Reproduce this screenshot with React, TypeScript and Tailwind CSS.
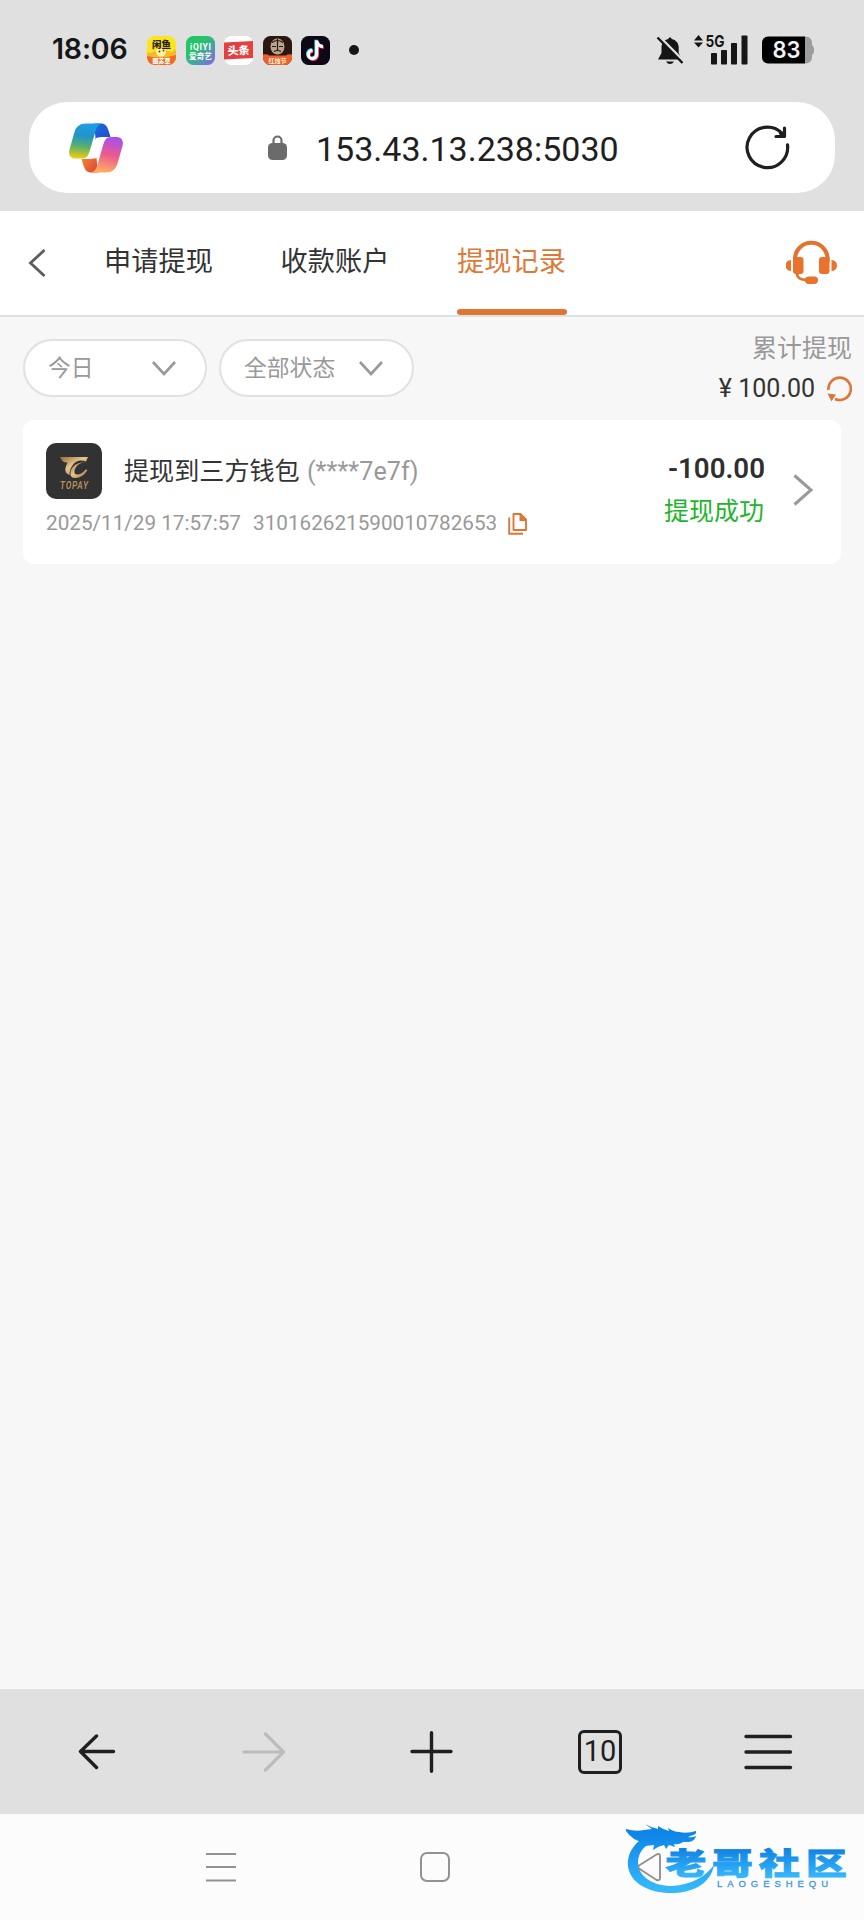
import React from "react";
import clsx from "clsx";

interface WithdrawRecord {
  title: string;
  account: string;
  time: string;
  orderNo: string;
  amount: string;
  status: string;
}

const tabs = ["申请提现", "收款账户", "提现记录"];

const records: WithdrawRecord[] = [
  {
    title: "提现到三方钱包",
    account: "(****7e7f)",
    time: "2025/11/29 17:57:57",
    orderNo: "310162621590010782653",
    amount: "-100.00",
    status: "提现成功",
  },
];

/* ---------- status bar ---------- */

function NotificationIcons() {
  return (
    <div className="ml-[19px] flex items-center gap-[9.6px]">
      {/* Xianyu */}
      <svg width="29" height="29" viewBox="0 0 29 29">
        <clipPath id="app-clip">
          <rect width="29" height="29" rx="7.5" />
        </clipPath>
        <g clipPath="url(#app-clip)">
          <rect width="29" height="29" fill="#fbe51e" />
          <path d="M3 17q11-5 22-1l3-3 1 3v6H0v-6z" fill="#f5b92c" />
          <ellipse cx="14" cy="16" rx="5" ry="4.5" fill="#fff3a0" />
          <circle cx="12.5" cy="15.5" r=".9" fill="#4a3510" />
          <circle cx="16.5" cy="14.5" r=".9" fill="#4a3510" />
          <path d="M0 20q14 4 29-1v10H0z" fill="#ef6a24" />
          <text x="14.5" y="12" textAnchor="middle" fontSize="9.5" fontWeight="900" fill="#26210a">闲鱼</text>
          <text x="14.5" y="27" textAnchor="middle" fontSize="6" fontWeight="900" fill="#fff">圈苏草</text>
        </g>
      </svg>
      {/* iQIYI */}
      <svg width="29" height="29" viewBox="0 0 29 29">
        <linearGradient id="iqiyi" x1="0" y1="0" x2="1" y2="1">
          <stop offset=".35" stopColor="#25c566" />
          <stop offset=".65" stopColor="#4c9fa8" />
          <stop offset="1" stopColor="#8a5cf0" />
        </linearGradient>
        <rect width="29" height="29" rx="7.5" fill="url(#iqiyi)" />
        <text x="4" y="13.5" fontSize="8.5" fontWeight="700" fill="#fff" textLength="21">iQIYI</text>
        <text x="14.5" y="22.5" textAnchor="middle" fontSize="7.6" fontWeight="700" fill="#fff">爱奇艺</text>
      </svg>
      {/* Toutiao */}
      <svg width="29" height="29" viewBox="0 0 29 29">
        <rect width="29" height="29" rx="7.5" fill="#fff" />
        <path d="M0 6.5 29 5v17L0 23.5z" fill="#e5403f" />
        <text x="14.5" y="18.5" textAnchor="middle" fontSize="11" fontWeight="900" fill="#fff" transform="rotate(-3 14.5 14.5)">头条</text>
      </svg>
      {/* Fanqie */}
      <svg width="29" height="29" viewBox="0 0 29 29">
        <g clipPath="url(#app-clip)">
          <rect width="29" height="29" fill="#2b1712" />
          <ellipse cx="14.5" cy="10.5" rx="7" ry="8" fill="#b9a48f" />
          <path d="M9 6.500q5.500-4 11 0M9 10.500h4M16 10.500h4M14.500 3v11M11 15.500q3.500-2 7 0" stroke="#2b1712" strokeWidth="1.200" fill="none" />
          <path d="M0 18.500q4-1 6 1h17q2-2 6-1V29H0z" fill="#ee5f2c" />
          <text x="14.5" y="27" textAnchor="middle" fontSize="6" fontWeight="900" fill="#ffe2c0">红烛节</text>
        </g>
      </svg>
      {/* Douyin */}
      <svg width="29" height="29" viewBox="0 0 29 29">
        <rect width="29" height="29" rx="7.5" fill="#0c0816" />
        <g fill="none" strokeWidth="3.200">
          <path d="M15.700 4.500v14a4.200 4.200 0 1 1-4.200-4.200M15.700 5c.6 3.500 3.200 5.400 6.300 5.600" stroke="#27e6e2" transform="translate(-.7 -.7)" />
          <path d="M15.700 4.500v14a4.200 4.200 0 1 1-4.200-4.200M15.700 5c.6 3.500 3.200 5.400 6.300 5.600" stroke="#fb2b57" transform="translate(.8 .8)" />
          <path d="M15.700 4.500v14a4.200 4.200 0 1 1-4.200-4.200M15.700 5c.6 3.500 3.200 5.400 6.300 5.600" stroke="#fff" />
        </g>
      </svg>
    </div>
  );
}

function StatusBar() {
  return (
    <div className="flex h-[102px] items-center pb-0.5 pl-[52px] pr-[50px]">
      <span className="w-[76px] whitespace-nowrap pb-0.5 font-['Inter'] text-[28.5px] font-semibold leading-none tracking-[-.2px] text-[#161616]">
        18:06
      </span>
      <NotificationIcons />
      <span className="ml-[19px] h-2.5 w-2.5 rounded-full bg-[#161616]" />

      <svg className="ml-auto" width="28" height="29" viewBox="0 0 28 29">
        <path d="M14 1.500c1 0 1.600.6 1.700 1.500 4.300.9 7 4 7 8.500v5.500l3.300 6.500H2l3.500-6.500v-5.500c0-4.500 2.600-7.600 6.800-8.500.1-.9.700-1.500 1.700-1.500z" fill="#161616" />
        <path d="M10 25.500h8q-1.500 2.500-4 2.500t-4-2.500z" fill="#161616" />
        <path d="M4 1.500 28 25.500" stroke="#e0e0e0" strokeWidth="3" />
        <path d="M1.500 1.500 26.500 27" stroke="#161616" strokeWidth="2.400" />
      </svg>
      <svg className="ml-2.5" width="54" height="42" viewBox="0 -6 54 42">
        <path d="M0 5.500 4.500 0 9 5.500zM0 7.500h9L4.500 12.500z" fill="#161616" />
        <text x="11.500" y="12" fontFamily="Inter" fontSize="16" fontWeight="700" textLength="19" lengthAdjust="spacingAndGlyphs" fill="#161616">5G</text>
        <g fill="#161616">
          <rect x="17" y="18" width="6" height="11.500" rx=".8" />
          <rect x="27" y="15" width="6" height="14.500" rx=".8" />
          <rect x="37" y="8" width="6" height="21.500" rx=".8" />
          <rect x="47.500" y=".5" width="6" height="29" rx=".8" />
        </g>
      </svg>
      <svg className="ml-[13px]" width="53" height="28" viewBox="0 0 53 28">
        <path d="M44 .5h1a6 6 0 0 1 6 6v2.500q2 1 2 5t-2 5v2.500a6 6 0 0 1-6 6h-1z" fill="#9c9c9c" />
        <path d="M7 .5h37v27H7a6 6 0 0 1-6-6V6.500a6 6 0 0 1 6-6z" fill="#000" />
        <text x="11.500" y="22.300" fontFamily="Inter" fontSize="23" fontWeight="600" textLength="28" lengthAdjust="spacingAndGlyphs" fill="#f2f2f2">83</text>
      </svg>
    </div>
  );
}

/* ---------- browser chrome ---------- */

function CopilotLogo() {
  return (
    <svg width="54" height="50" viewBox="0 0 54 50">
      <defs>
        <linearGradient id="cp-left" x1=".5" y1="0" x2=".4" y2="1">
          <stop offset="0" stopColor="#1c9ee8" />
          <stop offset=".35" stopColor="#2393c8" />
          <stop offset=".65" stopColor="#55b06f" />
          <stop offset="1" stopColor="#f0cb12" />
        </linearGradient>
        <linearGradient id="cp-right" x1=".6" y1="0" x2=".4" y2="1">
          <stop offset="0" stopColor="#a650ee" />
          <stop offset=".5" stopColor="#ee5a8c" />
          <stop offset="1" stopColor="#ffb061" />
        </linearGradient>
        <linearGradient id="cp-top" x1="0" y1="0" x2="1" y2="1">
          <stop offset="0" stopColor="#1b6fdc" />
          <stop offset="1" stopColor="#1f46cf" />
        </linearGradient>
        <linearGradient id="cp-bottom" x1="0" y1="0" x2="1" y2="1">
          <stop offset="0" stopColor="#f7902f" />
          <stop offset="1" stopColor="#dc4238" />
        </linearGradient>
      </defs>
      <path d="M25 .5h7c4 0 6 2.500 7.500 7l2 6.500H33c-4 0-5 3-6 6z" fill="url(#cp-top)" />
      <path d="M29 49.500h-7c-4 0-6-2.500-7.500-7l-2-6.500H21c4 0 5-3 6-6z" fill="url(#cp-bottom)" />
      <path d="M17 .5h16c-4 .5-5.500 4.500-7 9.500l-5 17c-1.500 5-3 8.500-8 8.500H7c-5 0-8-3-6.500-9l5-17.500C7 3.500 11 .5 17 .5z" fill="url(#cp-left)" />
      <path d="M37 49.500H22c4-.5 5.500-4.500 7-9.500l5-17.500c1.500-5 3-8.500 8-8.500h5c5 0 8 3 6.500 9l-5 17.500C46.500 46.500 43 49.500 37 49.500z" fill="url(#cp-right)" />
      {/* gap between the two ribbons */}
      <path d="M29 14.500h7.500c-2 1.500-2.800 4-3.500 6.500l-3 10c-1 3-2.500 4.500-5 4.500h-6c2-1 2.500-4 3.500-7.500l2.500-8c1-3.500 2-5.500 4-5.500z" fill="#fff" />
    </svg>
  );
}

function AddressBar() {
  return (
    <div className="mx-[29px] flex h-[91px] items-center rounded-[38px] bg-white pl-10 pr-[45px]">
      <CopilotLogo />
      <svg className="ml-[145px]" width="19" height="25" viewBox="0 0 19 25">
        <rect y="8" width="19" height="17" rx="4.500" fill="#6b6b6b" />
        <path d="M5.500 10V5.500a4 4 0 0 1 8 0V10" fill="none" stroke="#6b6b6b" strokeWidth="2.200" />
      </svg>
      <span className="ml-[29px] mt-0.5 whitespace-nowrap text-[34px] leading-none text-[#1f1f1f]">
        153.43.13.238:5030
      </span>
      <svg className="ml-auto" width="45" height="45" viewBox="0 0 45 45" fill="none" stroke="#1f1f1f" strokeWidth="3.200" strokeLinecap="round" strokeLinejoin="round">
        <path d="M42.500 19.800A20.300 20.300 0 1 1 36.700 8" />
        <path d="M39.500 3v8.500h-8.500" />
        <path d="M35.500 8.500l3 2" />
      </svg>
    </div>
  );
}

/* ---------- page ---------- */

function Header() {
  return (
    <header className="flex h-[106px] items-stretch border-b-2 border-[#e0e0e0] bg-white pl-7 pr-[27px]">
      <svg className="mt-[38px]" width="18" height="28" viewBox="0 0 18 28" fill="none" stroke="#5c5c5c" strokeWidth="2.800">
        <path d="M16.500 1 2.500 14l14 13" />
      </svg>
      <nav className="ml-[58px] flex gap-[67.500px]">
        {tabs.map((tab, i) => (
          <button
            key={tab}
            className={clsx(
              "flex w-[109px] flex-col justify-between whitespace-nowrap pt-[31px] text-[27.2px] leading-10",
              i === 2 ? "text-[#dd7a38]" : "text-[#333333]"
            )}
          >
            <span>{tab}</span>
            {i === 2 && <span className="h-[6px] w-[110px] rounded-full bg-[#dd7533]" />}
          </button>
        ))}
      </nav>
      {/* Customer service */}
      <svg className="ml-auto mt-[29px]" width="51" height="45" viewBox="0 0 51 45">
        <g fill="#e9732c">
          <path d="M5 20v11a5.500 5.500 0 0 1 0-11zM45.500 20v11a5.500 5.500 0 0 0 0-11z" />
          <path d="M7 17h7.500a3 3 0 0 1 3 3v11a3 3 0 0 1-3 3H10a3 3 0 0 1-3-3zM43.500 17H36a3 3 0 0 0-3 3v11a3 3 0 0 0 3 3h4.500a3 3 0 0 0 3-3z" />
          <rect x="19" y="36.500" width="13" height="7.500" rx="3.700" />
        </g>
        <path d="M9 22v-3a16.300 16.300 0 0 1 32.600 0v3" fill="none" stroke="#e0732f" strokeWidth="4" />
        <path d="M11 33c0 5 3 7 11 7" fill="none" stroke="#e0732f" strokeWidth="2.800" />
      </svg>
    </header>
  );
}

function Select({ label, className }: { label: string; className: string }) {
  return (
    <button
      className={clsx(
        "flex h-[58px] items-center justify-between rounded-full border-2 border-[#e1e1e1] bg-white pl-[23px] text-[22.8px] text-[#999999]",
        className
      )}
    >
      <span className="mt-0.5 whitespace-nowrap leading-none">{label}</span>
      <svg width="24" height="15" viewBox="0 0 24 15" fill="none" stroke="#999999" strokeWidth="2.600">
        <path d="m1 1 11 12L23 1" />
      </svg>
    </button>
  );
}

function FilterBar() {
  return (
    <div className="flex h-[103px] justify-between pl-[23px] pr-3 pt-[22px]">
      <div className="flex gap-3">
        <Select label="今日" className="w-[184px] pr-[29px]" />
        <Select label="全部状态" className="w-[195px] pr-[29px]" />
      </div>
      <div className="-mt-[7px] flex flex-col items-end">
        <span className="text-[25px] leading-[34px] text-[#999999]">累计提现</span>
        <div className="mt-1 flex items-center">
          <span className="whitespace-pre text-[25px] leading-[38px] text-[#333333]">¥ 100.00</span>
          <svg className="ml-3" width="25" height="26" viewBox="0 0 25 26">
            <path d="M1.500 14A11.200 11.200 0 1 1 8 23" fill="none" stroke="#dd7636" strokeWidth="2.600" />
            <path d="M.5 17.500 9 18.500 4.500 25.500z" fill="#dd7636" />
          </svg>
        </div>
      </div>
    </div>
  );
}

function TopayLogo() {
  return (
    <svg width="56" height="56" viewBox="0 0 56 56">
      <linearGradient id="gold" x1="0" y1="0" x2="1" y2="1">
        <stop offset="0" stopColor="#94693a" />
        <stop offset=".45" stopColor="#e4c58c" />
        <stop offset="1" stopColor="#a3733c" />
      </linearGradient>
      <rect width="56" height="56" rx="10" fill="#323232" />
      <path d="M14 14h28l-2 4.500q-8-3-12.500 2.500-4 5-4 11-6-2.500-3.500-9l1.500-3.500q-5 .5-7.500-5.500z" fill="url(#gold)" />
      <path d="M41 19q-9 0-12 7-2 5 2 5.500 5 0 8.500-5l2 .5q-5 8-12 8-6 0-5-6 2-10 16.500-10z" fill="url(#gold)" />
      <text x="0" y="0" transform="translate(14 46) scale(.8 1)" fontSize="10.500" fontWeight="600" fontStyle="italic" textLength="35" fill="#b58f5e">TOPAY</text>
    </svg>
  );
}

function RecordCard({ record }: { record: WithdrawRecord }) {
  return (
    <div className="mx-[23px] flex h-[144px] rounded-[11px] bg-white pl-[23px] pr-[27px]">
      <div className="flex flex-col pt-[23px]">
        <div className="flex h-14 items-center">
          <TopayLogo />
          <span className="ml-[22px] mt-0.5 whitespace-pre text-[25.1px] leading-none text-[#333333]">
            {record.title}{" "}
            <span className="ml-px tracking-[.1px] text-[#999999]">{record.account}</span>
          </span>
        </div>
        <div className="mt-2 flex h-8 items-center text-[20.7px] leading-none text-[#999999]">
          <span className="whitespace-nowrap">{record.time}</span>
          <span className="ml-3 whitespace-nowrap">{record.orderNo}</span>
          {/* Copy */}
          <svg className="ml-[11px] mt-0.5" width="19" height="22" viewBox="0 0 19 22">
            <path d="M5.500 1h7l5.500 5.500V17H5.500z" fill="none" stroke="#dd7636" strokeWidth="1.900" strokeLinejoin="round" />
            <path d="M11.500 1h1.500l5 5.500v1.500h-6.500z" fill="#dd7636" />
            <path d="M1.200 4.500v16.200H15" fill="none" stroke="#dd7636" strokeWidth="1.900" />
          </svg>
        </div>
      </div>
      <div className="ml-auto flex flex-col items-end pt-8">
        <span className="text-[27.7px] font-semibold leading-[34px] text-[#2f2f2f]">{record.amount}</span>
        <span className="mr-px mt-[8px] text-[25px] leading-9 text-[#1db52c]">{record.status}</span>
      </div>
      <svg className="ml-7 mt-[54px]" width="21" height="32" viewBox="0 0 21 32" fill="none" stroke="#999999" strokeWidth="3">
        <path d="m1.500 1.500 16.500 14.500L1.500 30.500" />
      </svg>
    </div>
  );
}

/* ---------- bottom bars ---------- */

function Toolbar() {
  return (
    <div className="flex h-[125px] items-center bg-[#e0e0e0] pl-[78px]">
      <svg width="38" height="36" viewBox="0 0 38 36" fill="none" stroke="#1f1f1f" strokeWidth="3.400" strokeLinecap="round" strokeLinejoin="round">
        <path d="M35.500 17.500H2.500M18.500 2 2.500 17.500l16 16" />
      </svg>
      <svg className="ml-[126px]" width="44" height="40" viewBox="0 0 44 40" fill="none" stroke="#bcbcbc" strokeWidth="3.200" strokeLinecap="round" strokeLinejoin="round">
        <path d="M2 20h39.500M23.500 2l18 18-18 18" />
      </svg>
      <svg className="ml-[124px]" width="43" height="42" viewBox="0 0 43 42" fill="none" stroke="#1f1f1f" strokeWidth="3.400" strokeLinecap="round">
        <path d="M2 20.500h39M21.500 1.700v38.500" />
      </svg>
      <div className="ml-[125px] flex h-11 w-11 items-center justify-center rounded-[6px] border-[3px] border-[#1f1f1f] text-[29px] leading-none text-[#1f1f1f]">
        10
      </div>
      <svg className="ml-[122px]" width="49" height="36" viewBox="0 0 49 36" fill="none" stroke="#1f1f1f" strokeWidth="3.400" strokeLinecap="round">
        <path d="M2 2.500h44.500M2 18h44.500M2 33.500h44.500" />
      </svg>
    </div>
  );
}

function Watermark() {
  return (
    <svg className="absolute left-[624px] top-2" width="232" height="76" viewBox="0 0 232 76">
      <linearGradient id="blue" gradientUnits="userSpaceOnUse" x1="0" y1="10" x2="0" y2="66">
        <stop offset="0" stopColor="#0d84e8" />
        <stop offset="1" stopColor="#33b8fb" />
      </linearGradient>
      <linearGradient id="blue-text" gradientUnits="userSpaceOnUse" x1="0" y1="-26" x2="0" y2="2">
        <stop offset="0" stopColor="#0f80e2" />
        <stop offset="1" stopColor="#34b4fa" />
      </linearGradient>
      <g fill="url(#blue)">
        <path d="M34 9C12 16 3 30 4 44c2 18 23 28 46 27 22-1 37-11 40-28-8 11-22 20-42 21-20 0-34-10-34-24 0-10 8-20 24-24z" />
        {/* horns, head and whiskers */}
        <path d="M2 7q10 3 18 1l8-1-7-5q7 4 13 5v-3q6 4 11 5l-1-3q6 4 11 4 8 2 17-1 1 3-3 4l-5 2q4 1 8-1-1 5-7 6l-6 0q-4 3-9 2l1 3-6-2-3 4-2-4-6 2-5 3 1-5-9 1q-3-1-2-4-10-1-17-11z" />
      </g>
      <g fill="url(#blue-text)" stroke="url(#blue-text)" strokeWidth=".9" fontSize="30" fontWeight="900">
        <text transform="translate(41.500 51.500) scale(1.360 1)">老</text>
        <text transform="translate(88 51.500) scale(1.360 1)">哥</text>
        <text transform="translate(135 51.500) scale(1.360 1)">社</text>
        <text transform="translate(182 51.500) scale(1.360 1)">区</text>
      </g>
      <text x="93" y="64.500" fontFamily="Liberation Sans" fontSize="9.500" textLength="111" fill="#3b97dc" stroke="#3b97dc" strokeWidth=".3">LAOGESHEQU</text>
    </svg>
  );
}

function SystemNav() {
  return (
    <div className="relative flex h-[106px] bg-[#fcfcfc] pl-[206px] pt-[38px]">
      <svg width="30" height="31" viewBox="0 0 30 31" fill="none" stroke="#929292" strokeWidth="2.200">
        <path d="M0 2h30M0 15h30M0 28.500h30" />
      </svg>
      <span className="ml-[184px] h-[30px] w-[30px] rounded-[7px] border-2 border-[#929292]" />
      <svg className="relative z-10 ml-[187px]" width="25" height="31" viewBox="0 0 25 31" fill="none" stroke="#8f8f8f" strokeWidth="1.900">
        <path d="M2 13.500 19.500 2.500q3.500-1.500 3.500 1.500v22q0 3-3.500 2L2 16.500q-1.500-1.500 0-3z" />
      </svg>
      <Watermark />
    </div>
  );
}

export default function App() {
  return (
    <div className="flex h-[1920px] w-[864px] flex-col overflow-hidden bg-[#f7f7f7] font-[Roboto,'Noto_Sans_CJK_SC',sans-serif]">
      <div className="h-[211px] shrink-0 bg-[#e0e0e0]">
        <StatusBar />
        <AddressBar />
      </div>
      <Header />
      <main className="flex-1">
        <FilterBar />
        {records.map((record) => (
          <RecordCard key={record.orderNo} record={record} />
        ))}
      </main>
      <Toolbar />
      <SystemNav />
    </div>
  );
}
